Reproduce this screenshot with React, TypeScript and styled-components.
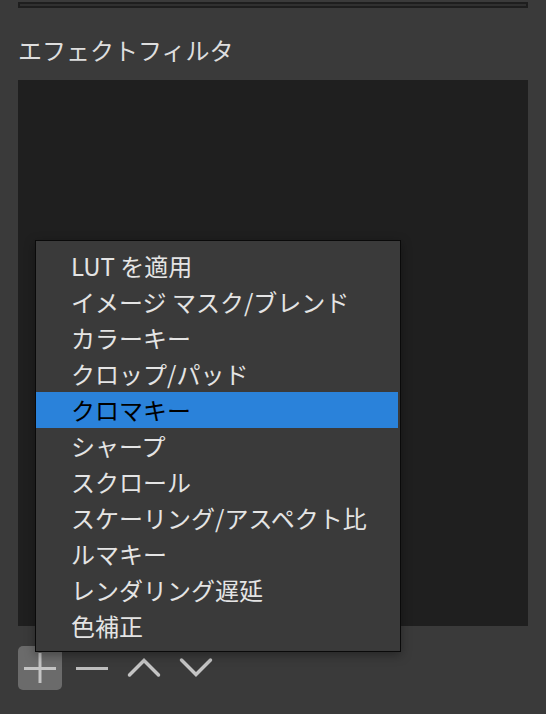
import React from 'react';
import styled, { createGlobalStyle } from 'styled-components';

const GlobalStyle = createGlobalStyle`
    html, body {
        margin: 0;
        padding: 0;
        background: #3a3a3a;
    }
    body {
        font-family: "Noto Sans CJK JP", "Noto Sans", sans-serif;
        -webkit-font-smoothing: antialiased;
    }
`;

const Page = styled.div`
    position: relative;
    width: 546px;
    height: 714px;
    padding: 2px 18px 0 18px;
    box-sizing: border-box;
    overflow: hidden;
`;

const PrevPanelEdge = styled.div`
    height: 6px;
    box-sizing: border-box;
    border: 2px solid #1e1e1e;
    background: #303030;
`;

const Title = styled.div`
    margin-top: 24px;
    height: 36px;
    line-height: 36px;
    font-size: 24px;
    color: #dedede;
    white-space: nowrap;
`;

const FilterList = styled.div`
    margin-top: 12px;
    height: 546px;
    background: #1f1f1f;
`;

const Toolbar = styled.div`
    display: flex;
    gap: 8px;
    margin-top: 20px;
`;

const ToolButton = styled.div<{ $active?: boolean }>`
    width: 44px;
    height: 44px;
    border-radius: 5px;
    display: flex;
    align-items: center;
    justify-content: center;
    background: ${p => p.$active ? '#6b6b6b' : 'transparent'};

    svg {
        display: block;
    }
`;

const Menu = styled.div`
    position: absolute;
    left: 35px;
    top: 240px;
    width: 366px;
    box-sizing: border-box;
    border: 1px solid #0a0a0a;
    background: #3a3a3a;
    padding: 7px 2px 7px 0;
    box-shadow: 0 3px 10px rgba(0,0,0,0.35);
    z-index: 10;
`;

const MenuItem = styled.div<{ $selected?: boolean }>`
    height: 36px;
    line-height: 36px;
    padding-left: 35px;
    font-size: 24px;
    white-space: nowrap;
    color: ${p => p.$selected ? '#000000' : '#e4e4e4'};
    background: ${p => p.$selected ? '#2a82da' : 'transparent'};
`;

const filters = [
    'LUT を適用',
    'イメージ マスク/ブレンド',
    'カラーキー',
    'クロップ/パッド',
    'クロマキー',
    'シャープ',
    'スクロール',
    'スケーリング/アスペクト比',
    'ルマキー',
    'レンダリング遅延',
    '色補正',
];

const iconColor = '#c4c4c4';

const App = () => {
    const selected = 4;

    return (
        <>
            <GlobalStyle />
            <Page>
                <PrevPanelEdge />
                <Title>エフェクトフィルタ</Title>
                <FilterList />
                <Toolbar>
                    <ToolButton $active>
                        <svg width="44" height="44" viewBox="0 0 44 44">
                            <path d="M6 22.5H38M22 7V37" stroke={iconColor} strokeWidth="3" fill="none" />
                        </svg>
                    </ToolButton>
                    <ToolButton>
                        <svg width="44" height="44" viewBox="0 0 44 44">
                            <path d="M6 22.5H38" stroke="#bdbdbd" strokeWidth="3" fill="none" />
                        </svg>
                    </ToolButton>
                    <ToolButton>
                        <svg width="44" height="44" viewBox="0 0 44 44">
                            <path d="M7.5 29L22 14.5L36.5 29" stroke={iconColor} strokeWidth="3.5" fill="none" strokeLinecap="round" strokeLinejoin="miter" />
                        </svg>
                    </ToolButton>
                    <ToolButton>
                        <svg width="44" height="44" viewBox="0 0 44 44">
                            <path d="M7.5 14L22 28.5L36.5 14" stroke={iconColor} strokeWidth="3.5" fill="none" strokeLinecap="round" strokeLinejoin="miter" />
                        </svg>
                    </ToolButton>
                </Toolbar>
                <Menu>
                    {filters.map((name, i) => (
                        <MenuItem key={name} $selected={i == selected}>{name}</MenuItem>
                    ))}
                </Menu>
            </Page>
        </>
    );
};

export default App;
